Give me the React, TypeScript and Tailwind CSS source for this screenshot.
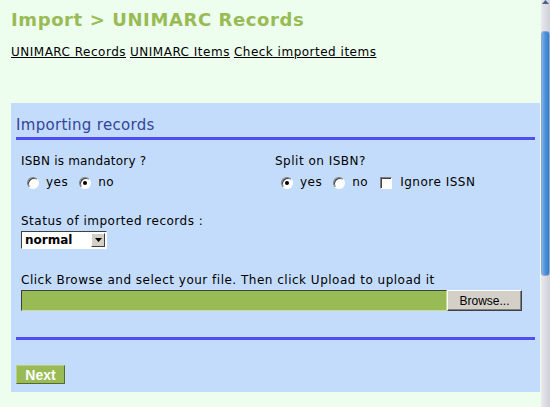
import React, { useState } from 'react';

interface IRadio {
  checked?: boolean;
  onClick?: () => void;
}

const Radio: React.FC<IRadio> = ({ checked, onClick }) => (
  <span
    onClick={onClick}
    className="relative inline-flex h-[12px] w-[12px] shrink-0 items-center justify-center rounded-full border border-t-[#808080] border-l-[#808080] border-b-white border-r-white bg-white shadow-[inset_1px_1px_0_#404040]"
  >
    {checked && <span className="h-[4px] w-[4px] rounded-full bg-black" />}
  </span>
);

const Checkbox: React.FC<IRadio> = ({ checked, onClick }) => (
  <span
    onClick={onClick}
    className="inline-flex h-[12px] w-[12px] shrink-0 items-center justify-center border border-t-[#808080] border-l-[#808080] border-b-white border-r-white bg-white shadow-[inset_1px_1px_0_#404040]"
  >
    {checked && <span className="text-[10px] leading-none">✓</span>}
  </span>
);

const App: React.FC = () => {
  const [mandatory, setMandatory] = useState<boolean>(false);
  const [split, setSplit] = useState<boolean>(true);
  const [ignoreIssn, setIgnoreIssn] = useState<boolean>(false);

  return (
    <div
      className="flex h-[407px] w-[550px] overflow-hidden text-black"
      style={{ fontFamily: '"DejaVu Sans", Verdana, sans-serif' }}
    >
      {/* page */}
      <div className="flex-1 bg-[#edfdee] pl-[11px]">
        <h1 className="pt-[9px] text-[18px] font-bold leading-[21px] tracking-[0.6px] text-[#99bb55]">
          Import &gt; UNIMARC Records
        </h1>
        <div className="mt-[15px] flex gap-[4px] text-[12px] leading-[15px] tracking-[0.5px]">
          <a className="underline">UNIMARC Records</a>
          <a className="underline">UNIMARC Items</a>
          <a className="underline">Check imported items</a>
        </div>

        {/* form panel */}
        <div className="mt-[43px] w-[529px] bg-[#c4dcfc] px-[5px] pb-[5px] pt-[13px]">
          <h2 className="text-[15px] leading-[18px] tracking-[0.3px] text-[#334499]">Importing records</h2>
          <div className="mt-[3px] h-[3px] bg-[#4f4ff4]" />

          <div className="px-[5px] text-[12px] leading-[15px] tracking-[0.5px]">
            <div className="mt-[14px] flex">
              <div className="w-[254px]">
                <p className="tracking-[0.2px]">ISBN is mandatory ?</p>
                <div className="mt-[6px] flex items-center pl-[6px]">
                  <Radio checked={mandatory} onClick={() => setMandatory(true)} />
                  <span className="ml-[7px] mr-[11px]">yes</span>
                  <Radio checked={!mandatory} onClick={() => setMandatory(false)} />
                  <span className="ml-[7px]">no</span>
                </div>
              </div>
              <div>
                <p>Split on ISBN?</p>
                <div className="mt-[6px] flex items-center pl-[6px]">
                  <Radio checked={split} onClick={() => setSplit(true)} />
                  <span className="ml-[7px] mr-[11px]">yes</span>
                  <Radio checked={!split} onClick={() => setSplit(false)} />
                  <span className="ml-[7px] mr-[12px]">no</span>
                  <Checkbox checked={ignoreIssn} onClick={() => setIgnoreIssn(!ignoreIssn)} />
                  <span className="ml-[8px]">Ignore ISSN</span>
                </div>
              </div>
            </div>

            <p className="mt-[24px]">Status of imported records :</p>
            <div className="mt-[2px] flex h-[18px] w-[86px] items-center border border-t-[#404040] border-l-[#404040] border-b-white border-r-white bg-white pl-[3px]">
              <span className="flex-1 font-bold leading-none tracking-normal">normal</span>
              <span className="mr-[1px] flex h-[14px] w-[14px] items-center justify-center border border-t-white border-l-white border-b-[#404040] border-r-[#404040] bg-[#d4d0c8]">
                <svg width="7" height="4" viewBox="0 0 7 4">
                  <path d="M0 0h7L3.5 4z" fill="#000" />
                </svg>
              </span>
            </div>

            <p className="mt-[24px]">
              Click Browse and select your file. Then click Upload to upload it
            </p>
            <div className="mt-[2px] flex h-[21px] w-[501px]">
              <div className="flex-1 border border-t-[#404040] border-l-[#404040] border-b-[#c8dc98] border-r-[#c8dc98] bg-[#99bb55]" />
              <button
                className="w-[75px] border border-t-white border-l-white border-b-[#404040] border-r-[#404040] bg-[#d4d0c8] text-[12px] leading-none tracking-normal shadow-[inset_-1px_-1px_0_#808080]"
                style={{ fontFamily: '"Liberation Sans", Arial, sans-serif' }}
              >
                Browse...
              </button>
            </div>
          </div>

          <div className="mt-[26px] h-[3px] bg-[#4f4ff4]" />

          <button
            className="mt-[25px] h-[19px] w-[49px] border border-t-[#b8d080] border-l-[#b8d080] border-b-[#556b2f] border-r-[#556b2f] bg-[#99bb55] text-[14px] font-bold leading-none text-white"
            style={{ fontFamily: '"Liberation Sans", Arial, sans-serif' }}
          >
            Next
          </button>
        </div>
      </div>

      {/* scrollbar */}
      <div className="flex w-[9px] flex-col bg-gradient-to-r from-[#e8e8ee] to-[#d0d0d8]">
        <div className="flex h-[9px] items-start justify-center">
          <svg width="7" height="4" viewBox="0 0 7 4">
            <path d="M3.5 0L7 4H0z" fill="#4d6185" />
          </svg>
        </div>
        <div className="mt-[22px] h-[245px] rounded-[3px] border border-[#8fa8d0] bg-gradient-to-r from-[#7fb0e8] via-[#4a90d8] to-[#3a7cc8]" />
      </div>
    </div>
  );
};

export default App;
